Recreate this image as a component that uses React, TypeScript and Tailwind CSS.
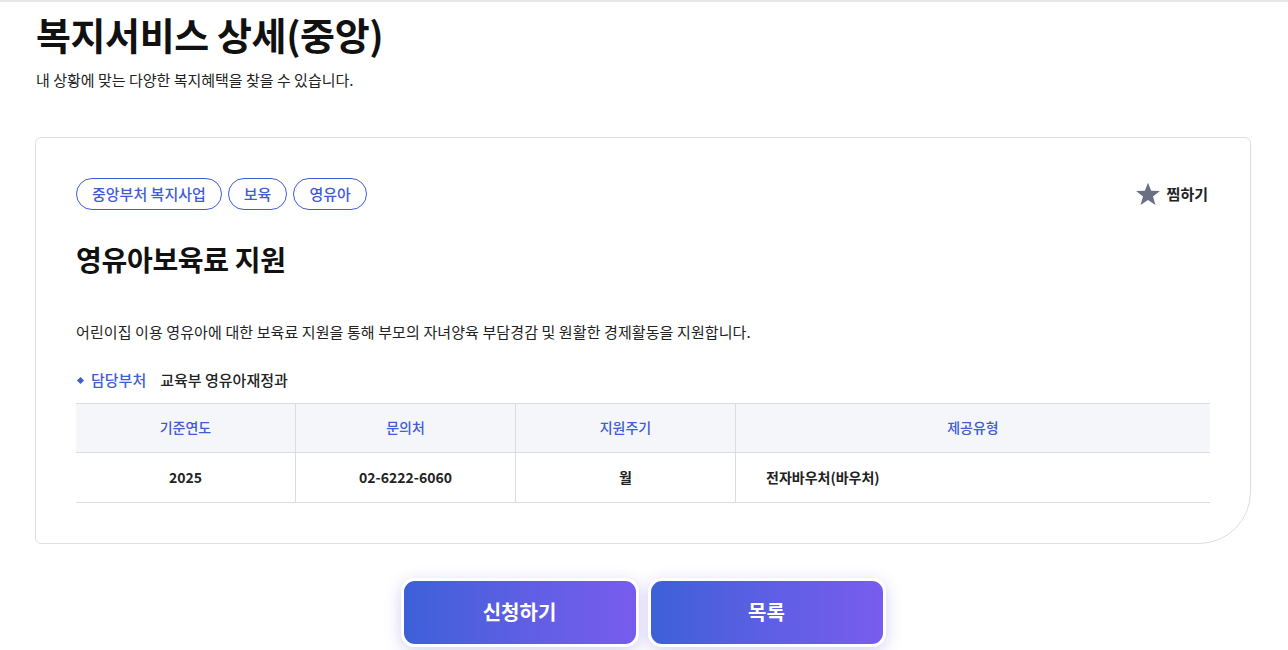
const cols = [
  { head: "기준연도", value: "2025", w: "w-[219px]", center: true },
  { head: "문의처", value: "02-6222-6060", w: "w-[220px]", center: true },
  { head: "지원주기", value: "월", w: "w-[220px]", center: true },
  { head: "제공유형", value: "전자바우처(바우처)", w: "flex-1", center: false },
];

function StarIcon() {
  return (
    <svg viewBox="0 0 24 24" className="w-[26px] h-[26px]" fill="#6b6f86">
      <polygon points="12,1.5 14.9,9 23,9.3 16.6,14.3 18.9,22.2 12,17.6 5.1,22.2 7.4,14.3 1,9.3 9.1,9" />
    </svg>
  );
}

export default function App() {
  return (
    <div
      className="min-h-[650px] bg-white border-t-2 border-[#e5e5e5] text-[#111]"
      style={{ fontFamily: '"Noto Sans CJK KR", "Noto Sans", sans-serif' }}
    >
      <div className="w-[1216px] ml-[35px]">
        {/* Page heading */}
        <h1 className="text-[38px] font-bold leading-[52px] tracking-[-0.4px] mt-[6px] ml-[1px]">복지서비스 상세(중앙)</h1>
        <p className="text-[15px] leading-[22px] mt-[9px] ml-[1px] text-[#222]">내 상황에 맞는 다양한 복지혜택을 찾을 수 있습니다.</p>

        {/* Detail card */}
        <div className="mt-[46px] border border-[#dedede] rounded-md rounded-br-[52px] px-[40px] pt-[40px] pb-[40px]">
          <div className="flex items-center justify-between">
            <div className="flex gap-[6px]">
              {["중앙부처 복지사업", "보육", "영유아"].map((t) => (
                <span
                  key={t}
                  className="h-[32px] px-[15px] flex items-center rounded-full border border-[#3f5bd6] text-[#3f5bd6] text-[15px] font-medium"
                >
                  {t}
                </span>
              ))}
            </div>
            <button className="flex items-center gap-[6px] text-[15px] font-bold text-[#222] mr-[2px]">
              <StarIcon />
              찜하기
            </button>
          </div>

          <h2 className="text-[28px] font-bold leading-[40px] mt-[29px] tracking-[-0.3px]">영유아보육료 지원</h2>

          <p className="text-[15px] leading-[22px] mt-[42px] text-[#222] tracking-[0.1px]">
            어린이집 이용 영유아에 대한 보육료 지원을 통해 부모의 자녀양육 부담경감 및 원활한 경제활동을 지원합니다.
          </p>

          <div className="flex items-center mt-[26px] text-[15px] font-medium">
            <span className="w-[5px] h-[5px] bg-[#3f5bd6] rotate-45 ml-[2px] mr-[8px]" />
            <span className="text-[#3f5bd6]">담당부처</span>
            <span className="ml-[14px] text-[#222]">교육부 영유아재정과</span>
          </div>

          {/* Info table */}
          <div className="mt-[11px] border-t border-b border-[#dcdcdc]">
            <div className="flex bg-[#f5f6fa] border-b border-[#dcdcdc] h-[49px]">
              {cols.map((c, i) => (
                <div
                  key={c.head}
                  className={`${c.w} flex items-center justify-center text-[14px] text-[#3f5bd6] font-medium ${i > 0 ? "border-l border-[#dcdcdc]" : ""}`}
                >
                  {c.head}
                </div>
              ))}
            </div>
            <div className="flex h-[49px]">
              {cols.map((c, i) => (
                <div
                  key={c.head}
                  className={`${c.w} flex items-center ${c.center ? "justify-center" : "pl-[30px]"} text-[14px] font-bold text-[#222] ${i > 0 ? "border-l border-[#dcdcdc]" : ""}`}
                >
                  {c.value}
                </div>
              ))}
            </div>
          </div>
        </div>

        {/* Actions */}
        <div className="flex justify-center gap-[9px] mt-[34px]">
          {["신청하기", "목록"].map((b) => (
            <button
              key={b}
              className="w-[238px] h-[69px] rounded-[14px] border-[3px] border-white bg-gradient-to-r from-[#3c60d8] to-[#785cee] text-white text-[20px] font-bold shadow-[0_4px_16px_rgba(110,100,220,0.3)]"
            >
              {b}
            </button>
          ))}
        </div>
      </div>
    </div>
  );
}
